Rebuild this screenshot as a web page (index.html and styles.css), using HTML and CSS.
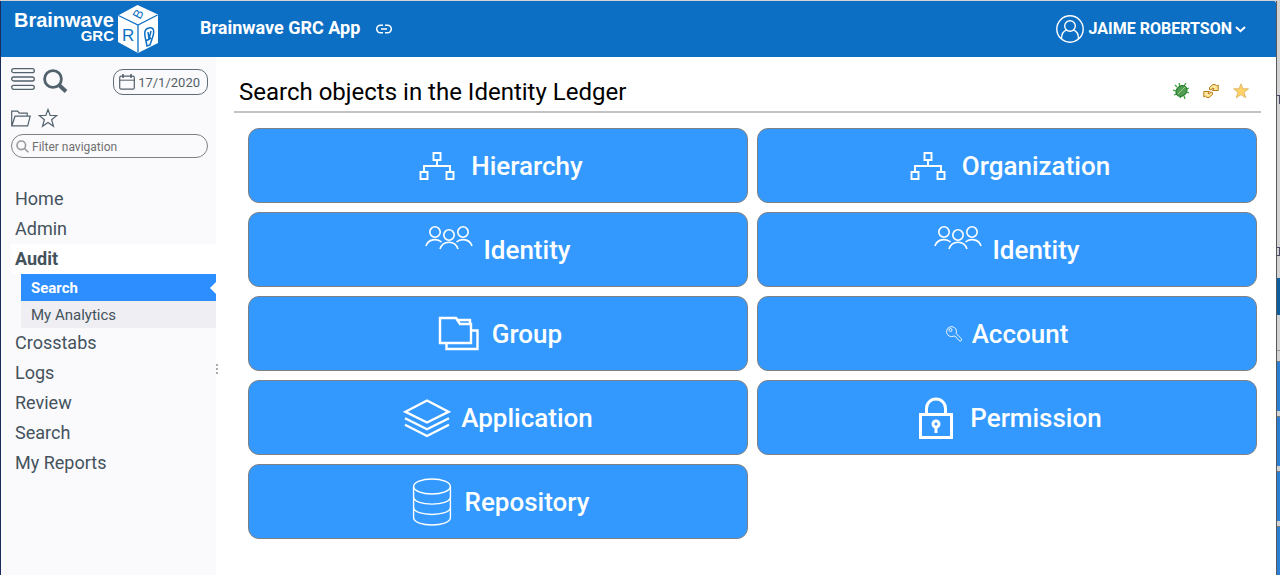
FILE: index.html
```html
<!DOCTYPE html>
<html lang="en">
<head>
<meta charset="utf-8">
<title>Brainwave GRC App</title>
<link rel="stylesheet" href="styles.css">
</head>
<body>
<svg class="defs" width="0" height="0" aria-hidden="true">
  <symbol id="tree" viewBox="0 0 48 48">
    <g fill="none" stroke="currentColor" stroke-width="1.900">
      <path d="M20.500 11h7v7h-7zM7.500 30h7v7h-7zM33.500 30h7v7h-7z"/>
      <path d="M24 18v6M11 30v-6h26v6"/>
    </g>
  </symbol>
  <symbol id="people" viewBox="0 0 48 48">
    <g fill="none" stroke="currentColor" stroke-width="1.600">
      <circle cx="10" cy="6" r="5.200"/><circle cx="24" cy="9" r="5.200"/><circle cx="38" cy="6" r="5.200"/>
      <path d="M1 20c2-7 11-8 15.500-4M15 23c3-9 15-9 18 0M31.500 16c4.500-4 13.500-3 15.500 4"/>
    </g>
  </symbol>
</svg>
<div class="desktop">
  <div class="window">
    <header class="topbar">
      <a class="logo" href="#" aria-label="Brainwave GRC">
        <span class="logo-text"><span class="logo-name">Brainwave</span><span class="logo-sub">GRC</span></span>
        <svg width="42" height="50" viewBox="0 0 42 50">
          <path d="M20.500 1L41 10.500v28.500L21 49 1 38V11.500z" fill="#fff"/>
          <path d="M1.500 11.500L21 21l19.500-10M21 21v27.500" fill="none" stroke="#0d6fc4" stroke-width="1.300"/>
          <g class="cube-letter"><text x="5" y="37">R</text><text class="cube-top" transform="translate(23 16) rotate(-62)">B</text></g>
          <path d="M29 37c-2-8-2-12 3-13s6 3 3 11l-2 6-3 1zM29 37l5-3M31 28l1 7 2-8" fill="none" stroke="#0d6fc4" stroke-width="1.500"/>
        </svg>
      </a>
      <h1 class="app-name">Brainwave GRC App</h1>
      <button class="plain link-btn" type="button" aria-label="Copy link">
        <svg width="16" height="10" viewBox="0 0 16 10" fill="none" stroke="currentColor" stroke-width="1.500"><path d="M7 1.200H4.500a3.600 3.600 0 0 0 0 7.600H7M9 1.200h2.500a3.600 3.600 0 0 1 0 7.600H9M5 5h6"/></svg>
      </button>
      <button class="plain user" type="button">
        <svg width="28" height="28" viewBox="0 0 28 28" fill="none" stroke="currentColor" stroke-width="1.400"><circle cx="14" cy="14" r="13.200"/><circle cx="14" cy="11" r="5.300"/><path d="M5.500 23.800c0-5 2-8 5.500-9M22.500 23.800c0-5-2-8-5.500-9"/></svg>
        <span>JAIME ROBERTSON</span>
        <svg width="11" height="7" viewBox="0 0 11 7" fill="none" stroke="currentColor" stroke-width="2"><path d="M1 1l4.500 4.200L10 1"/></svg>
      </button>
    </header>
    <div class="body">
      <aside class="sidebar">
        <div class="tools">
          <button class="plain" type="button" aria-label="Menu">
            <svg width="24" height="24" viewBox="0 0 24 24" fill="none" stroke="currentColor" stroke-width="1.300"><rect x=".7" y=".7" width="22.600" height="4" rx="2"/><rect x=".7" y="9" width="22.600" height="4" rx="2"/><rect x=".7" y="17.300" width="22.600" height="4" rx="2"/></svg>
          </button>
          <button class="plain" type="button" aria-label="Search">
            <svg width="25" height="26" viewBox="0 0 25 26" fill="none" stroke="currentColor"><circle cx="10" cy="11" r="8.400" stroke-width="2.800"/><path d="M16 17l7 6.500" stroke-width="4"/></svg>
          </button>
          <button class="date" type="button">
            <svg width="16" height="16" viewBox="0 0 16 16" fill="none" stroke="currentColor"><rect x=".7" y="2.200" width="14.600" height="13" rx="1.500" stroke-width="1.200"/><path d="M1 6.200h14" stroke-width="1"/><path d="M4 0v4M12 0v4" stroke-width="1.500"/></svg>
            <span>17/1/2020</span>
          </button>
        </div>
        <div class="tools minor">
          <button class="plain" type="button" aria-label="Open">
            <svg width="20" height="19" viewBox="0 0 20 19" fill="none" stroke="currentColor" stroke-width="1.200"><path d="M.7 17.800V3.200h6l1.500 2h8v3M.9 17.800L4 8.200h15.200l-2.500 9.600z"/></svg>
          </button>
          <button class="plain" type="button" aria-label="Favourites">
            <svg width="20" height="20" viewBox="0 0 20 20" fill="none" stroke="currentColor" stroke-width="1.200"><path d="M10 1.500l2.200 6h6.600l-5.200 4.200 1.900 6.600L10 14.400l-5.500 3.900 1.900-6.600L1.200 7.500h6.600z"/></svg>
          </button>
        </div>
        <label class="filter">
          <svg width="13" height="13" viewBox="0 0 13 13" fill="none" stroke="currentColor" stroke-width="1.600"><circle cx="5.300" cy="5.300" r="4.300"/><path d="M8.500 8.500l3.800 3.800"/></svg>
          <input type="text" placeholder="Filter navigation" aria-label="Filter navigation">
        </label>
        <nav class="nav">
          <a href="#">Home</a>
          <a href="#">Admin</a>
          <a href="#" class="open">Audit</a>
          <div class="subnav">
            <a href="#" class="current">Search</a>
            <a href="#">My Analytics</a>
          </div>
          <a href="#">Crosstabs</a>
          <a href="#">Logs</a>
          <a href="#">Review</a>
          <a href="#">Search</a>
          <a href="#">My Reports</a>
        </nav>
      </aside>
      <div class="splitter"><i></i><i></i><i></i></div>
      <main class="content">
        <div class="heading">
          <h2>Search objects in the Identity Ledger</h2>
          <div class="actions">
            <button class="plain" type="button" aria-label="Debug">
              <svg width="16" height="16" viewBox="0 0 16 16"><path d="M4 4L2 2M7 3L6 0M11 3l2-3M13 6l3-1M13 9l3 1M11 13l1 3M8 13l-1 2M3 8L0 7M4 11l-3 1" stroke="#35a83c" stroke-width="1.300"/><ellipse cx="8.500" cy="8" rx="6" ry="5" transform="rotate(-42 8.500 8)" fill="#4f9d50" stroke="#207528"/><path d="M5 11l7-7" stroke="#9bd08f"/></svg>
            </button>
            <button class="plain" type="button" aria-label="Refresh">
              <svg width="16" height="16" viewBox="0 0 16 16"><g fill="#ffe9a0" stroke="#b97a10"><path id="arrow" d="M6.500 6.500V4.500L10 1.500h2l1.500 1.300 1.700-.8v5.500H9.500l1.500-1.800-1.500-.7-1 2z"/><use href="#arrow" transform="rotate(180 8 8)"/></g></svg>
            </button>
            <button class="plain" type="button" aria-label="Add to favourites">
              <svg width="16" height="16" viewBox="0 0 16 16"><path d="M8 .8l1.900 5h5.500l-4.300 3.500 1.600 5.500L8 11.600l-4.700 3.200 1.600-5.500L.6 5.800h5.500z" fill="#ffd166" stroke="#dfb96a"/></svg>
            </button>
          </div>
        </div>
        <div class="tiles">
          <a class="tile" href="#"><svg><use href="#tree"/></svg><span>Hierarchy</span></a>
          <a class="tile" href="#"><svg><use href="#tree"/></svg><span>Organization</span></a>
          <a class="tile" href="#"><svg><use href="#people"/></svg><span>Identity</span></a>
          <a class="tile" href="#"><svg><use href="#people"/></svg><span>Identity</span></a>
          <a class="tile" href="#"><svg viewBox="0 0 48 48" fill="none" stroke="currentColor" stroke-width="2.400"><path d="M6 8h16l4 6h11v19H6zM22 8l2 2h12v4M12.500 33v6h31V20.500H37"/></svg><span>Group</span></a>
          <a class="tile" href="#"><svg class="small" viewBox="0 0 16 16" fill="none" stroke="currentColor" stroke-width=".9"><path d="M10.200 7.500a5 5 0 1 0-2.600 2.700l1.400-.2 4 4.500 1.800.7.700-1-.2-1.500z"/><circle cx="4.500" cy="4" r="1.500"/></svg><span>Account</span></a>
          <a class="tile" href="#"><svg viewBox="0 0 48 48" fill="none" stroke="currentColor" stroke-width="2.400"><path d="M24 6.500l21.500 11.300L24 28.500 2.500 17.800zM2 24.200l22 11 22-11M2 30.700l22 11.300 22-11.300"/></svg><span>Application</span></a>
          <a class="tile" href="#"><svg viewBox="0 0 48 48" fill="none" stroke="currentColor" stroke-width="3"><path d="M14.500 20v-5.500a9.500 9.500 0 0 1 19 0V20"/><path d="M8.500 20.500h31v23h-31z"/><circle cx="24" cy="30" r="3"/><path d="M24 33v6"/></svg><span>Permission</span></a>
          <a class="tile" href="#"><svg viewBox="0 0 48 48" fill="none" stroke="currentColor" stroke-width="1.400"><ellipse cx="25" cy="8.500" rx="18.400" ry="7.500"/><path d="M6.600 8.500v31c0 10 36.800 10 36.800 0v-31M6.600 19c0 9.500 36.800 9.500 36.800 0M6.600 29.300c0 9.500 36.800 9.500 36.800 0"/></svg><span>Repository</span></a>
        </div>
      </main>
    </div>
  </div>
  <div class="behind">
    <div class="behind-mark"></div>
    <div class="behind-mark low"></div>
    <div class="behind-bar"></div>
    <div class="behind-line"></div>
    <div class="behind-tile"></div><div class="behind-tile"></div><div class="behind-tile"></div><div class="behind-tile"></div>
  </div>
</div>
</body>
</html>
```

FILE: styles.css
```css
* { box-sizing: border-box; }
body { margin: 0; font-family: Roboto, "Liberation Sans", sans-serif; color: #44525c; background: #fff; }
a { color: inherit; text-decoration: none; }
svg { display: block; flex: none; }
.defs { position: absolute; }
button, input { font: inherit; color: inherit; }
.plain { display: flex; align-items: center; padding: 0; border: 0; background: none; cursor: pointer; }

.desktop { display: flex; min-height: 100vh; border-top: 1px solid #d3d3d3; }
.window { flex: 1; display: flex; flex-direction: column; border-left: 1px solid #1b2b5e; border-right: 1px solid #55585c; }

.topbar { display: flex; align-items: center; height: 56px; padding: 0 30px 0 12px; background: #0d6fc4; color: #fff; border-radius: 0 2px 0 0; }
.logo { display: flex; align-items: center; gap: 3px; width: 187px; }
.logo-text { display: flex; flex-direction: column; align-items: flex-end; width: 101px; padding-bottom: 4px; font-family: "Liberation Sans", sans-serif; font-weight: bold; }
.logo-name { font-size: 20px; line-height: 18px; }
.logo-sub { font-size: 15px; line-height: 14px; }
.cube-letter { font: 17px "Liberation Sans", sans-serif; fill: #0d6fc4; }
.cube-top { font-size: 13px; }
.app-name { margin: 0; padding-bottom: 2px; font-size: 18px; line-height: 24px; font-weight: 700; }
.link-btn { margin-left: 16px; }
.user { margin-left: auto; font-size: 16px; font-weight: 700; }
.user span { padding: 0 3px 2px 5px; }

.body { flex: 1; display: flex; }
.sidebar { width: 215px; padding: 11px 0 0 10px; background: #fafafc; }
.tools { display: flex; align-items: flex-start; gap: 8px; padding-right: 8px; color: #53636d; }
.minor { gap: 7px; margin: 13px 0 6px; }
.date { display: flex; align-items: center; gap: 3px; height: 26px; margin: 1px 0 0 auto; padding: 0 7px 0 5px; border: 1px solid #5d6c77; border-radius: 10px; background: none; font-size: 13px; color: #555f68; }
.filter { display: flex; align-items: center; gap: 3px; height: 24px; margin-right: 8px; padding: 0 4px; border: 1px solid #808080; border-radius: 12px; color: #999; }
.filter input { flex: 1; min-width: 0; padding: 2px 0 0; border: 0; outline: 0; background: none; font-size: 12px; }
.filter input::placeholder { color: #707070; opacity: 1; }
.nav { display: flex; flex-direction: column; margin-top: 26px; }
.nav a { padding-left: 4px; font-size: 18px; line-height: 30px; }
.nav .open { background: #fff; font-weight: 700; }
.subnav { display: flex; flex-direction: column; margin-left: 10px; background: #eeeef3; }
.nav .subnav a { padding: 1px 0 0 10px; font-size: 15px; line-height: 26px; }
.subnav .current { display: flex; align-items: center; justify-content: space-between; background: #2c8eff; color: #fff; font-weight: 700; }
.current::after { content: ""; border: 6px solid transparent; border-left: 0; border-right-color: #fff; }
.splitter { display: flex; flex-direction: column; gap: 2px; width: 3px; padding-top: 307px; }
.splitter i { width: 2px; height: 2px; background: #aaa; }

.content { flex: 1; padding: 19px 15px 36px; }
.heading { display: flex; align-items: center; justify-content: space-between; height: 37px; padding: 0 12px 5px 5px; border-bottom: 2px solid #c3c3c3; }
.heading h2 { margin: 0; padding-top: 2px; font-size: 24px; line-height: 30px; font-weight: 400; color: #000; }
.actions { display: flex; gap: 14px; }
.tiles { display: grid; grid-template-columns: 1fr 1fr; gap: 9px; padding: 15px 4px 0 14px; }
.tile { display: flex; align-items: center; justify-content: center; gap: 10px; min-height: 75px; padding: 13px 0 12px; border: 1px solid #808080; border-radius: 11px; background: #3399ff; color: #fff; font-size: 26px; font-weight: 500; }
.tile svg { width: 48px; height: 48px; }
.tile .small { width: 16px; height: 16px; }

.behind { display: flex; flex-direction: column; width: 3px; background: #d3d3d3; }
.behind-mark { height: 9px; margin-top: 94px; border: solid #4a4a66; border-width: 1px 1px 0 0; }
.behind-mark.low { margin-top: 143px; border-bottom-width: 1px; }
.behind-bar { height: 37px; margin-top: 22px; background: #0d5f9f; }
.behind-line { height: 1px; margin: 35px 0 10px; background: #999; }
.behind-tile { height: 50px; margin-bottom: 5px; border-top: 1px solid #777; background: #2b7fd4; }
.behind-tile:last-child { flex: 1; height: 49px; margin-bottom: 0; }
```
